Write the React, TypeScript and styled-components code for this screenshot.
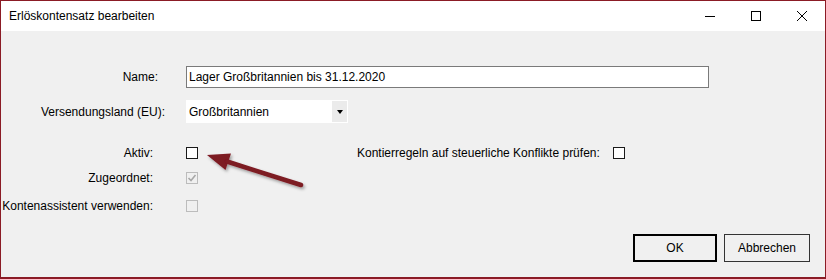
import React from 'react'
import styled, { createGlobalStyle } from 'styled-components'

const GlobalStyle = createGlobalStyle`
  html, body {
    margin: 0;
    padding: 0;
    background: #ffffff;
  }
  * {
    box-sizing: border-box;
  }
`

const Window = styled.div`
  position: relative;
  width: 826px;
  height: 279px;
  display: flex;
  flex-direction: column;
  border: 1px solid #8b1b25;
  border-bottom-width: 2px;
  font-family: 'Liberation Sans', Arial, sans-serif;
  font-size: 12px;
  color: #000;
  overflow: hidden;
`

const TitleBar = styled.div`
  height: 30px;
  display: flex;
  align-items: center;
  background: #ffffff;
`

const Title = styled.div`
  flex: 1;
  padding-left: 8px;
  padding-bottom: 1px;
`

const CaptionButton = styled.div`
  width: 46px;
  height: 30px;
  display: flex;
  align-items: center;
  justify-content: center;
`

const Body = styled.div`
  flex: 1;
  display: flex;
  flex-direction: column;
  background: #f0f0f0;
  padding-top: 35px;
`

const Row = styled.div<{ $mt?: number; $h?: number }>`
  display: flex;
  align-items: center;
  height: ${(p) => p.$h ?? 22}px;
  margin-top: ${(p) => p.$mt ?? 0}px;
`

const Label = styled.div<{ $pr: number }>`
  width: 185px;
  flex-shrink: 0;
  text-align: right;
  padding-right: ${(p) => p.$pr}px;
  white-space: nowrap;
`

const TextInput = styled.div`
  width: 523px;
  height: 22px;
  display: flex;
  align-items: center;
  padding-left: 2px;
  background: #ffffff;
  border: 1px solid #7a7a7a;
`

const Combo = styled.div`
  width: 162px;
  height: 23px;
  display: flex;
  align-items: stretch;
  background: #ffffff;
  border: 1px solid #ffffff;
`

const ComboText = styled.div`
  flex: 1;
  display: flex;
  align-items: center;
  padding-left: 2px;
`

const ComboArrow = styled.div`
  width: 15px;
  background: #ebebeb;
  display: flex;
  align-items: center;
  justify-content: center;
  &::after {
    content: '';
    width: 0;
    height: 0;
    border-left: 3.5px solid transparent;
    border-right: 3.5px solid transparent;
    border-top: 4px solid #000;
  }
`

const CheckSection = styled.div`
  display: flex;
  margin-top: 20px;
`

const LeftChecks = styled.div`
  width: 197px;
  display: flex;
  flex-direction: column;
`

const RightChecks = styled.div`
  margin-left: 159px;
  display: flex;
  flex-direction: column;
`

const Box = styled.div<{ $disabled?: boolean }>`
  width: 12px;
  height: 12px;
  flex-shrink: 0;
  border: 1px solid ${(p) => (p.$disabled ? '#bcbcbc' : '#1a1a1a')};
  background: ${(p) => (p.$disabled ? '#f0f0f0' : '#ffffff')};
  display: flex;
  align-items: center;
  justify-content: center;
`

const RightLabel = styled.div`
  padding-right: 13px;
  white-space: nowrap;
`

const Footer = styled.div`
  margin-top: auto;
  display: flex;
  justify-content: flex-end;
  gap: 7px;
  padding: 0 15px 15px 0;
`

const Button = styled.div<{ $default?: boolean; $w: number }>`
  width: ${(p) => p.$w}px;
  height: 28px;
  display: flex;
  align-items: center;
  justify-content: center;
  background: #f0f0f0;
  border: ${(p) => (p.$default ? '2px solid #000' : '1px solid #333')};
`

const Annotation = styled.svg`
  position: absolute;
  left: 0;
  top: 0;
  pointer-events: none;
`

function CheckBox({ checked, disabled }: { checked?: boolean; disabled?: boolean }) {
  return (
    <Box $disabled={disabled}>
      {checked && (
        <svg width="10" height="10" viewBox="0 0 10 10">
          <path d="M1.5 5 L4 7.5 L8.5 2" fill="none" stroke="#a8a8a8" strokeWidth="1.6" />
        </svg>
      )}
    </Box>
  )
}

export default function App() {
  return (
    <>
      <GlobalStyle />
      <Window>
        <TitleBar>
          <Title>Erlöskontensatz bearbeiten</Title>
          <CaptionButton>
            <svg width="10" height="10" viewBox="0 0 10 10">
              <path d="M0 5.5 H10" stroke="#000" strokeWidth="1" />
            </svg>
          </CaptionButton>
          <CaptionButton>
            <svg width="10" height="10" viewBox="0 0 10 10">
              <rect x="0.5" y="0.5" width="9" height="9" fill="none" stroke="#000" strokeWidth="1" />
            </svg>
          </CaptionButton>
          <CaptionButton>
            <svg width="10" height="10" viewBox="0 0 10 10">
              <path d="M0 0 L10 10 M10 0 L0 10" stroke="#000" strokeWidth="1" />
            </svg>
          </CaptionButton>
        </TitleBar>
        <Body>
          <Row>
            <Label $pr={28}>Name:</Label>
            <TextInput>Lager Großbritannien bis 31.12.2020</TextInput>
          </Row>
          <Row $mt={12} $h={23}>
            <Label $pr={21}>Versendungsland (EU):</Label>
            <Combo>
              <ComboText>Großbritannien</ComboText>
              <ComboArrow />
            </Combo>
          </Row>
          <CheckSection>
            <LeftChecks>
              <Row $h={20}>
                <Label $pr={33}>Aktiv:</Label>
                <CheckBox />
              </Row>
              <Row $h={20} $mt={5}>
                <Label $pr={33}>Zugeordnet:</Label>
                <CheckBox checked disabled />
              </Row>
              <Row $h={20} $mt={8}>
                <Label $pr={33}>Kontenassistent verwenden:</Label>
                <CheckBox disabled />
              </Row>
            </LeftChecks>
            <RightChecks>
              <Row $h={20}>
                <RightLabel>Kontierregeln auf steuerliche Konflikte prüfen:</RightLabel>
                <CheckBox />
              </Row>
            </RightChecks>
          </CheckSection>
          <Footer>
            <Button $default $w={84}>OK</Button>
            <Button $w={86}>Abbrechen</Button>
          </Footer>
        </Body>
        <Annotation width="826" height="279" viewBox="0 0 826 279">
          <defs>
            <filter id="shadow" x="-20%" y="-20%" width="140%" height="160%">
              <feDropShadow dx="1.5" dy="2" stdDeviation="1.5" floodColor="#000" floodOpacity="0.35" />
            </filter>
          </defs>
          <g filter="url(#shadow)" fill="#7d1a22">
            <polygon points="206,154 230,152.5 224.5,169" />
            <path d="M226 160.5 L300 184" stroke="#7d1a22" strokeWidth="4.5" strokeLinecap="round" />
          </g>
        </Annotation>
      </Window>
    </>
  )
}
